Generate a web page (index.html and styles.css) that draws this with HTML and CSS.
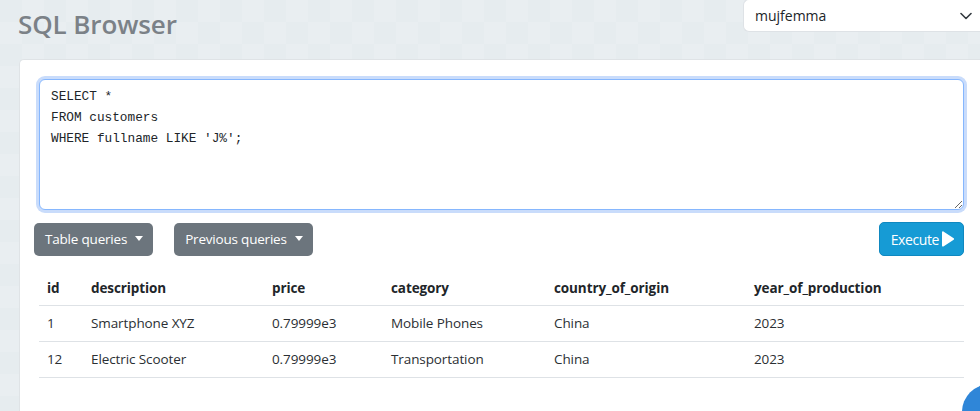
FILE: index.html
```html
<!DOCTYPE html>
<html lang="en">
<head>
<meta charset="utf-8">
<title>SQL Browser</title>
<link rel="stylesheet" href="styles.css">
</head>
<body>
<div class="page">
  <header class="topbar">
    <h1 class="title">SQL Browser</h1>
    <div class="db-select">
      <span class="db-name">mujfemma</span>
      <svg class="chev" width="12" height="8" viewBox="0 0 12 8"><path d="M1 1.5l5 5 5-5" fill="none" stroke="#343a40" stroke-width="1.6" stroke-linecap="round" stroke-linejoin="round"/></svg>
    </div>
  </header>
  <main class="card">
    <textarea class="query" spellcheck="false">SELECT *
FROM customers
WHERE fullname LIKE 'J%';</textarea>
    <div class="toolbar">
      <div class="toolbar-left">
        <button class="btn btn-gray">Table queries <span class="caret"></span></button>
        <button class="btn btn-gray">Previous queries <span class="caret"></span></button>
      </div>
      <button class="btn btn-exec">Execute <svg class="play" width="14" height="16" viewBox="0 0 14 16"><path d="M1 1.2v13.6c0 .7.8 1.1 1.4.7l10.3-6.8c.5-.3.5-1.1 0-1.4L2.4.5C1.8.1 1 .5 1 1.2z" fill="#fff"/></svg></button>
    </div>
    <table class="results">
      <thead>
        <tr><th class="c-id">id</th><th class="c-desc">description</th><th class="c-price">price</th><th class="c-cat">category</th><th class="c-country">country_of_origin</th><th>year_of_production</th></tr>
      </thead>
      <tbody>
        <tr><td>1</td><td>Smartphone XYZ</td><td>0.79999e3</td><td>Mobile Phones</td><td>China</td><td>2023</td></tr>
        <tr><td>12</td><td>Electric Scooter</td><td>0.79999e3</td><td>Transportation</td><td>China</td><td>2023</td></tr>
      </tbody>
    </table>
  </main>
  <div class="fab"></div>
</div>
</body>
</html>
```
FILE: styles.css
```css
* { box-sizing: border-box; }
html, body { margin: 0; height: 100%; overflow: hidden; }
body {
  font-family: "Open Sans", "Noto Sans", sans-serif;
  color: #212529;
  background-color: #e6ecef;
  background-image:
    conic-gradient(rgba(255,255,255,0.12) 25%, transparent 0 50%, rgba(255,255,255,0.12) 0 75%, transparent 0);
  background-size: 44px 44px;
}
.page { position: relative; height: 100%; overflow: hidden; }
.topbar {
  display: flex;
  justify-content: space-between;
  align-items: flex-start;
  height: 59px;
  padding-left: 18px;
}
.title {
  margin: 6px 0 0;
  font-size: 26px;
  font-weight: 600;
  color: #7b8187;
  letter-spacing: -0.1px;
}
.db-select {
  flex: 0 0 237px;
  height: 33px;
  margin-top: -1px;
  background: #fff;
  border: 1px solid #dee2e6;
  border-right: none;
  border-radius: 6px 0 0 6px;
  display: flex;
  align-items: center;
  justify-content: space-between;
  padding: 0 8px 0 11px;
  font-size: 14px;
}
.card {
  background: #fff;
  border: 1px solid #dfe3e6;
  border-right: none;
  border-bottom: none;
  border-radius: 5px 0 0 0;
  margin-left: 19px;
  padding: 19px 16px 0 19px;
  height: 352px;
}
.query {
  display: block;
  width: 100%;
  height: 131px;
  resize: vertical;
  border: 1px solid #86b7fe;
  border-radius: 6px;
  box-shadow: 0 0 0 3px #c9dcfb;
  padding: 6px 11px;
  font-family: "Liberation Mono", "DejaVu Sans Mono", monospace;
  font-size: 12.75px;
  line-height: 21px;
  color: #212529;
  outline: none;
}
.toolbar {
  display: flex;
  justify-content: space-between;
  align-items: center;
  margin-top: 12px;
  margin-left: -5px;
}
.toolbar-left { display: flex; gap: 21px; }
.btn {
  font-family: inherit;
  font-size: 13.5px;
  letter-spacing: -0.2px;
  border: none;
  border-radius: 5px;
  height: 33px;
  padding: 0 10px 0 11px;
  color: #fff;
  display: inline-flex;
  align-items: center;
  gap: 5px;
}
.btn-gray { background: #6c757d; }
.btn-exec { background: #169bd5; padding: 0 8px 0 11px; gap: 2px; height: 34px; border: 1px solid #0f88c0; font-size: 14px; letter-spacing: -0.4px; }
.caret {
  display: inline-block;
  width: 0; height: 0;
  border-left: 4.5px solid transparent;
  border-right: 4.5px solid transparent;
  border-top: 5px solid #fff;
  margin-left: 3px;
  margin-bottom: 1px;
}
.results {
  width: 100%;
  border-collapse: collapse;
  margin-top: 15px;
  font-size: 13.5px;
  letter-spacing: -0.1px;
}
.results th, .results td {
  text-align: left;
  padding: 0 8px;
  height: 36px;
  border-bottom: 1px solid #dee2e6;
  white-space: nowrap;
}
.results th { font-weight: 700; height: 34px; }
.results td { color: #2b2f33; }
.c-id { width: 44px; }
.c-desc { width: 181px; }
.c-price { width: 119px; }
.c-cat { width: 163px; }
.c-country { width: 200px; }
.fab {
  position: absolute;
  left: 962px;
  top: 384px;
  width: 56px;
  height: 56px;
  border-radius: 50%;
  background: #2f86d8;
}
```
